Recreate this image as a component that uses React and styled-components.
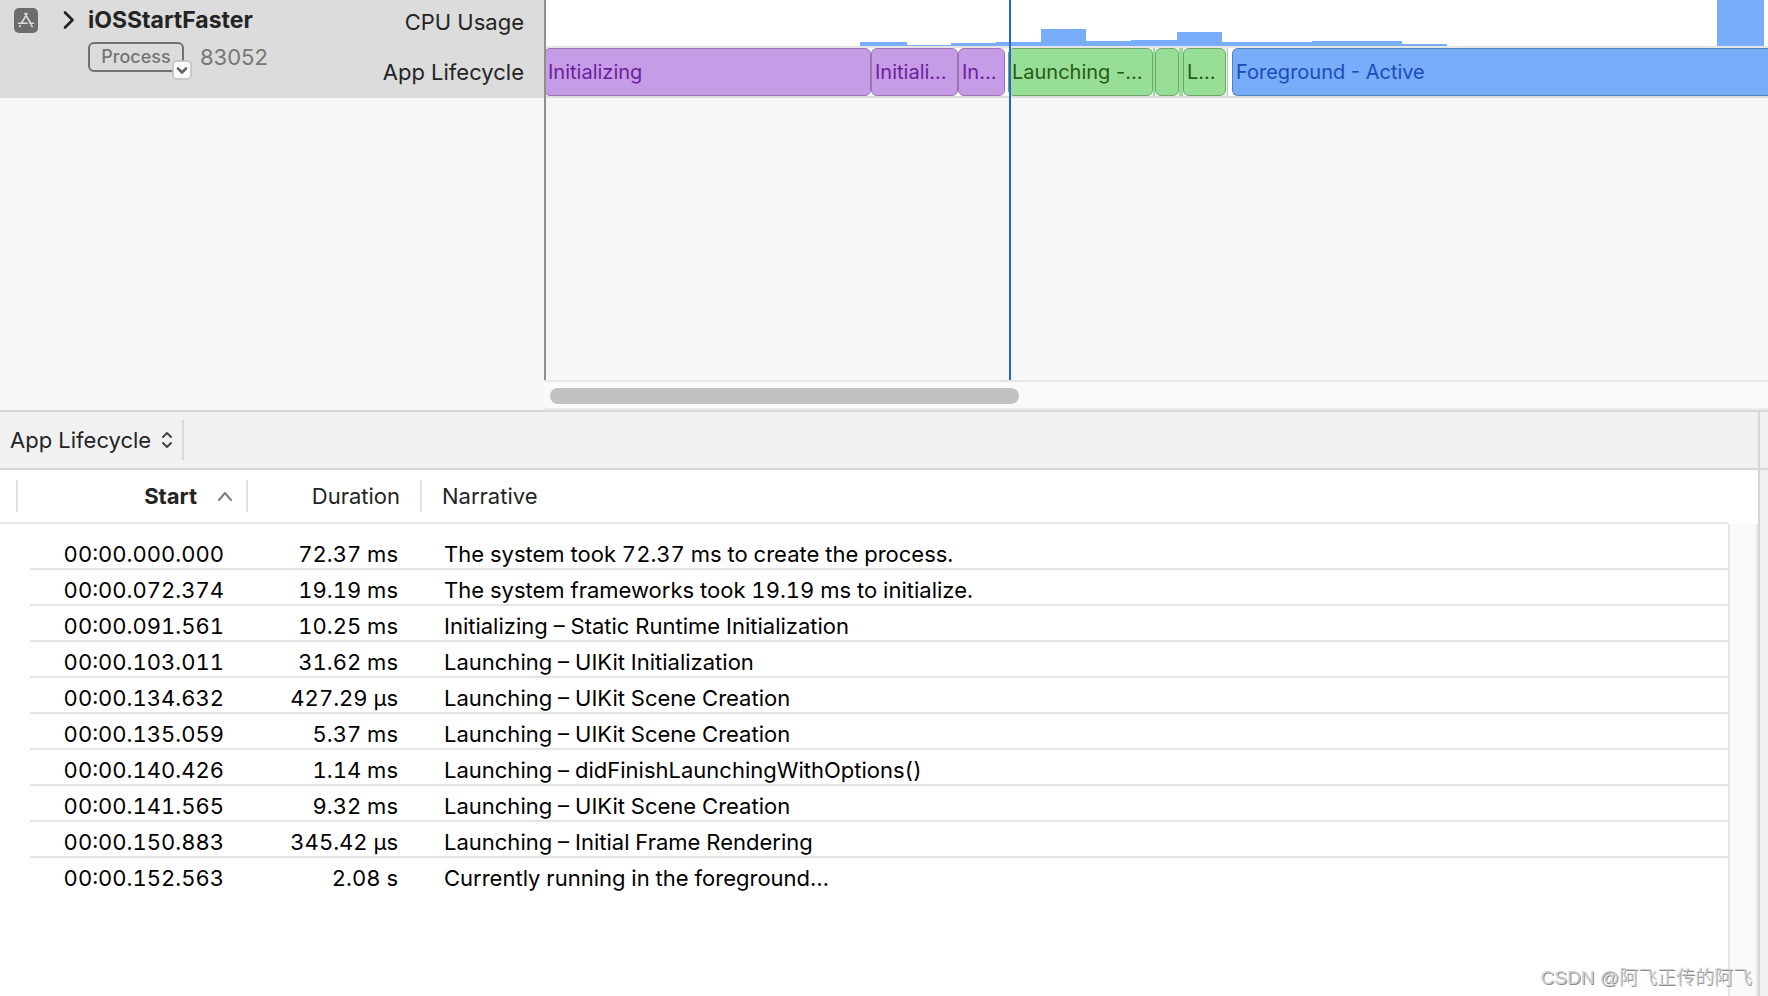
import React from "react";
import styled, { createGlobalStyle } from "styled-components";

const GlobalStyle = createGlobalStyle`
  *, *::before, *::after { box-sizing: border-box; }
  body {
    margin: 0;
    background: #fff;
    color: #242424;
    font-family: Inter, "Noto Sans CJK SC", sans-serif;
    font-size: 22px;
    line-height: 28px;
  }
  button, select { font: inherit; color: inherit; margin: 0; }
`;

const Window = styled.main`
  position: relative;
  display: flex;
  flex-direction: column;
  min-height: 100vh;
  overflow: hidden;
`;

const Tracks = styled.section`
  display: grid;
  grid-template-columns: 544px minmax(0, 1fr);
  height: 412px;
  background: #f7f7f7;
  border-bottom: 2px solid #d7d7d7;
`;

const TrackHeader = styled.header`
  display: flex;
  justify-content: space-between;
  height: 98px;
  padding: 0 20px 0 14px;
  background: #dcdcdc;
`;

const TrackTarget = styled.div`
  display: flex;
  align-items: flex-start;
  padding-top: 6px;
`;

const AppIcon = styled.svg`
  width: 24px;
  height: 26px;
  margin-top: 2px;
`;

const DisclosureButton = styled.button`
  display: flex;
  align-items: center;
  justify-content: center;
  width: 50px;
  height: 28px;
  padding: 0 0 0 12px;
  border: 0;
  background: none;
`;

const TargetInfo = styled.div`
  display: flex;
  flex-direction: column;
  gap: 8px;
`;

const TargetName = styled.strong`
  font-size: 23px;
  font-weight: 700;
`;

const TargetDetails = styled.div`
  display: flex;
  align-items: center;
  gap: 16px;
  color: #777;
`;

const ProcessButton = styled.button`
  position: relative;
  height: 30px;
  width: 96px;
  padding: 0;
  border: 2px solid #717171;
  border-radius: 6px;
  background: none;
  color: #757575;
  font-size: 18px;
  font-weight: 500;
  line-height: 26px;
`;

const ProcessBadge = styled.svg`
  position: absolute;
  right: -10px;
  bottom: -10px;
  width: 20px;
  height: 20px;
`;

const TrackNames = styled.div`
  display: flex;
  flex-direction: column;
  gap: 22px;
  padding-top: 8px;
  text-align: right;
`;

const Timeline = styled.div`
  position: relative;
  display: flex;
  flex-direction: column;
`;

const Plots = styled.div`
  flex: 1;
`;

const CpuPlot = styled.div`
  display: flex;
  align-items: flex-end;
  height: 48px;
  padding-left: 316px;
  overflow: hidden;
  background: #fff;
  border-bottom: 2px solid #e5e5e5;
`;

const CpuBar = styled.div`
  flex: none;
  width: ${(p) => p.$width}px;
  height: ${(p) => p.$height}px;
  background: #77adf9;
`;

const LifecyclePlot = styled.div`
  display: flex;
  height: 50px;
  background: #fff;
  border-bottom: 2px solid #dedede;
`;

const tones = {
  purple: { fill: "#c59ce5", line: "#9a72b4", text: "#6b1f9e" },
  green: { fill: "#97de96", line: "#6da56c", text: "#275c14" },
  blue: { fill: "#77adf9", line: "#4f80bd", text: "#1c4cb8" },
};

const Segment = styled.div`
  flex: ${(p) => (p.$width ? `0 0 ${p.$width}px` : "1 1 0")};
  height: 48px;
  padding-left: 3px;
  overflow: hidden;
  white-space: nowrap;
  font-size: 20px;
  line-height: 46px;
  color: ${(p) => tones[p.$tone].text};
  background: ${(p) => tones[p.$tone].fill};
  border: 1px solid ${(p) => tones[p.$tone].line};
  border-radius: ${(p) => (p.$width ? "6px" : "6px 0 0 6px")};
  border-right-width: ${(p) => (p.$width ? 1 : 0)}px;
`;

const Sliver = styled.div`
  flex: 0 0 ${(p) => p.$width}px;
  background: ${(p) => (p.$tone ? tones[p.$tone].fill : "transparent")};
`;

const TimeMarker = styled.div`
  position: absolute;
  left: ${(p) => p.$at}px;
  top: 0;
  bottom: 30px;
  width: 2px;
  background: ${(p) => p.$color};
`;

const TimelineScroller = styled.div`
  height: 30px;
  padding: 6px;
  background: #fafafa;
  border-top: 2px solid #e6e6e6;
  border-bottom: 2px solid #ededed;
`;

const ScrollThumb = styled.div`
  width: 469px;
  height: 16px;
  border-radius: 8px;
  background: #c1c1c1;
`;

const Lower = styled.section`
  flex: 1;
  display: flex;
`;

const Detail = styled.div`
  flex: 1;
  min-width: 0;
  display: flex;
  flex-direction: column;
  border-right: 2px solid #d7d7d7;
`;

const Inspector = styled.aside`
  width: 8px;
  background: #f1f1f1;
`;

const barStyle = `
  height: 58px;
  background: #f1f1f1;
  border-bottom: 2px solid #d7d7d7;
`;

const Toolbar = styled.div`
  ${barStyle}
  display: flex;
  align-items: center;
`;

const InspectorBar = styled.div`
  ${barStyle}
`;

const ViewPicker = styled.label`
  display: flex;
  align-items: center;
  width: 184px;
  height: 40px;
  padding-left: 10px;
  border-right: 2px solid #d9d9d9;
`;

const ViewSelect = styled.select`
  appearance: none;
  width: 150px;
  height: 32px;
  padding: 0;
  border: 0;
  background: none;
`;

const DetailBody = styled.div`
  flex: 1;
  display: flex;
  align-items: stretch;
`;

const TableArea = styled.div`
  flex: 1;
  min-width: 0;
`;

const DetailScroller = styled.div`
  width: 30px;
  margin-top: 54px;
  background: #fafafa;
  border-left: 2px solid #e6e6e6;
  border-right: 2px solid #e9e9e9;
`;

const EventTable = styled.table`
  width: 100%;
  table-layout: fixed;
  border-spacing: 0;
`;

const Column = styled.col`
  width: ${(p) => p.$width}px;
`;

const HeadCell = styled.th`
  height: 54px;
  padding: 0;
  border-bottom: 2px solid #e5e5e5;
  font-weight: ${(p) => (p.$sorted ? 700 : 400)};
`;

const HeadLabel = styled.div`
  display: flex;
  align-items: center;
  justify-content: ${(p) => (p.$start ? "flex-start" : "flex-end")};
  gap: 20px;
  height: 32px;
  padding: 0 ${(p) => p.$pad || 0}px 0 20px;
  border-right: ${(p) => (p.$start ? "0" : "2px solid #e2e2e2")};
`;

const GutterMark = styled.div`
  width: 18px;
  height: 32px;
  border-right: 2px solid #e2e2e2;
`;

const Rows = styled.tbody`
  color: #000;
  &::before {
    content: "";
    display: block;
    height: 10px;
  }
`;

const Cell = styled.td`
  height: 36px;
  padding: 8px ${(p) => (p.$right ? 24 : 0)}px 2px ${(p) => (p.$right ? 0 : 22)}px;
  line-height: 24px;
  text-align: ${(p) => (p.$right ? "right" : "left")};
  font-variant-numeric: tabular-nums;
  white-space: nowrap;
  border-bottom: 2px solid #e5e5e5;
  tr:last-child > & { border-bottom-color: transparent; }
`;

const GutterCell = styled.td`
  padding: 0;
`;

const Watermark = styled.div`
  position: absolute;
  right: 16px;
  bottom: 4px;
  font-family: "Liberation Sans", "Noto Sans CJK SC", sans-serif;
  font-size: 19px;
  font-weight: 300;
  color: #d0d0d0;
  text-shadow: 1px 1px 0 #8c8c8c;
`;

const cpuBars = [
  [47, 4], [44, 1], [45, 3], [45, 4], [45, 17], [45, 5], [46, 6],
  [45, 14], [90, 4], [90, 5], [45, 2], [270, 0], [47, 46],
];

const events = [
  ["00:00.000.000", "72.37 ms", "The system took 72.37 ms to create the process."],
  ["00:00.072.374", "19.19 ms", "The system frameworks took 19.19 ms to initialize."],
  ["00:00.091.561", "10.25 ms", "Initializing – Static Runtime Initialization"],
  ["00:00.103.011", "31.62 ms", "Launching – UIKit Initialization"],
  ["00:00.134.632", "427.29 µs", "Launching – UIKit Scene Creation"],
  ["00:00.135.059", "5.37 ms", "Launching – UIKit Scene Creation"],
  ["00:00.140.426", "1.14 ms", "Launching – didFinishLaunchingWithOptions()"],
  ["00:00.141.565", "9.32 ms", "Launching – UIKit Scene Creation"],
  ["00:00.150.883", "345.42 µs", "Launching – Initial Frame Rendering"],
  ["00:00.152.563", "2.08 s", "Currently running in the foreground…"],
];

function Stroke({ width, height, d, color, weight = 2 }) {
  return (
    <svg width={width} height={height} viewBox={`0 0 ${width} ${height}`} fill="none"
      stroke={color} strokeWidth={weight} strokeLinecap="round" strokeLinejoin="round" aria-hidden="true">
      <path d={d} />
    </svg>
  );
}

export default function App() {
  return (
    <Window>
      <GlobalStyle />
      <Tracks>
        <TrackHeader>
          <TrackTarget>
            <AppIcon viewBox="0 0 24 26" aria-hidden="true">
              <rect width="24" height="25" rx="5" fill="#6c6c6c" />
              <path
                d="M13 5.5 7.4 15.3M11 5.5l5.8 10M4.5 15.3h8.6M16 15.3h3.3M6.2 17.6l-.6 1M17.2 16.8l1 1.8"
                fill="none" stroke="#dcdcdc" strokeWidth="1.6" strokeLinecap="round"
              />
            </AppIcon>
            <DisclosureButton aria-label="Expand iOSStartFaster">
              <Stroke width={12} height={20} d="M2 2.5 9.5 10 2 17.5" color="#242424" weight={2.6} />
            </DisclosureButton>
            <TargetInfo>
              <TargetName>iOSStartFaster</TargetName>
              <TargetDetails>
                <ProcessButton>
                  Process
                  <ProcessBadge viewBox="0 0 20 20" aria-hidden="true">
                    <rect x="1" y="1" width="18" height="18" rx="4" fill="#fafafa" stroke="#bdbdbd" strokeWidth="1.5" />
                    <path d="m6 8.5 4 4 4-4" fill="none" stroke="#666" strokeWidth="2.6" strokeLinecap="round" strokeLinejoin="round" />
                  </ProcessBadge>
                </ProcessButton>
                <span>83052</span>
              </TargetDetails>
            </TargetInfo>
          </TrackTarget>
          <TrackNames>
            <span>CPU Usage</span>
            <span>App Lifecycle</span>
          </TrackNames>
        </TrackHeader>
        <Timeline>
          <Plots>
            <CpuPlot>
              {cpuBars.map(([width, height], i) => (
                <CpuBar key={i} $width={width} $height={height} />
              ))}
            </CpuPlot>
            <LifecyclePlot>
              <Segment $tone="purple" $width={327}>Initializing</Segment>
              <Segment $tone="purple" $width={87}>Initiali…</Segment>
              <Segment $tone="purple" $width={47}>In…</Segment>
              <Sliver $width={3} />
              <Segment $tone="green" $width={145}>Launching -…</Segment>
              <Sliver $tone="green" $width={2} />
              <Segment $tone="green" $width={24} />
              <Sliver $tone="green" $width={4} />
              <Segment $tone="green" $width={43}>L…</Segment>
              <Sliver $width={1} />
              <Sliver $tone="green" $width={1} />
              <Sliver $width={4} />
              <Segment $tone="blue">Foreground - Active</Segment>
            </LifecyclePlot>
          </Plots>
          <TimelineScroller>
            <ScrollThumb />
          </TimelineScroller>
          <TimeMarker $at={0} $color="#8e8e93" />
          <TimeMarker $at={465} $color="#2463d5" />
        </Timeline>
      </Tracks>

      <Lower>
        <Detail>
          <Toolbar>
            <ViewPicker>
              <ViewSelect aria-label="Detail view" defaultValue="App Lifecycle">
                <option>App Lifecycle</option>
                <option>CPU Usage</option>
              </ViewSelect>
              <Stroke width={14} height={20} d="M3 7 7 3l4 4M3 13l4 4 4-4" color="#444" weight={2} />
            </ViewPicker>
          </Toolbar>
          <DetailBody>
            <TableArea>
              <EventTable>
                <colgroup>
                  <Column $width={30} />
                  <Column $width={218} />
                  <Column $width={174} />
                  <col />
                </colgroup>
                <thead>
                  <tr>
                    <HeadCell as="td"><GutterMark /></HeadCell>
                    <HeadCell $sorted scope="col" aria-sort="ascending">
                      <HeadLabel $pad={13}>
                        Start
                        <Stroke width={16} height={12} d="M2 10 8 3l6 7" color="#7d7d7d" weight={2} />
                      </HeadLabel>
                    </HeadCell>
                    <HeadCell scope="col"><HeadLabel $pad={20}>Duration</HeadLabel></HeadCell>
                    <HeadCell scope="col"><HeadLabel $start>Narrative</HeadLabel></HeadCell>
                  </tr>
                </thead>
                <Rows>
                  {events.map(([start, duration, narrative]) => (
                    <tr key={start}>
                      <GutterCell />
                      <Cell $right>{start}</Cell>
                      <Cell $right>{duration}</Cell>
                      <Cell>{narrative}</Cell>
                    </tr>
                  ))}
                </Rows>
              </EventTable>
            </TableArea>
            <DetailScroller />
          </DetailBody>
        </Detail>
        <Inspector>
          <InspectorBar />
        </Inspector>
      </Lower>
      <Watermark>CSDN @阿飞正传的阿飞</Watermark>
    </Window>
  );
}
